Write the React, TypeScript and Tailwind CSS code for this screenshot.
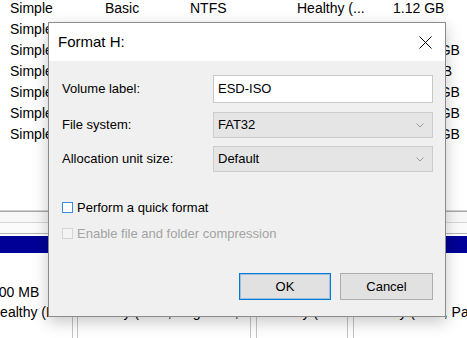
import React from 'react';

const volumes = [
  { layout: 'Simple', type: 'Basic', fs: 'NTFS', status: 'Healthy (...', size: '1.12 GB' },
  { layout: 'Simple', type: 'Basic', fs: 'NTFS', status: 'Healthy (...', size: '500 MB' },
  { layout: 'Simple', type: 'Basic', fs: 'NTFS', status: 'Healthy (...', size: '465.76 GB' },
  { layout: 'Simple', type: 'Basic', fs: 'NTFS', status: 'Healthy (...', size: '19.77 GB' },
  { layout: 'Simple', type: 'Basic', fs: 'NTFS', status: 'Healthy (...', size: '465.76 GB' },
  { layout: 'Simple', type: 'Basic', fs: 'NTFS', status: 'Healthy (...', size: '465.76 GB' },
  { layout: 'Simple', type: 'Basic', fs: 'NTFS', status: 'Healthy (...', size: '465.76 GB' },
];

function Chevron() {
  return (
    <svg width="8" height="5" viewBox="0 0 8 5" className="text-[#9a9a9a]">
      <path d="M0.5 0.5 L4 4 L7.5 0.5" fill="none" stroke="currentColor" strokeWidth="1" />
    </svg>
  );
}

function Select({ value }: { value: string }) {
  return (
    <div className="flex h-[26px] w-[220px] items-center justify-between border border-[#cccccc] bg-[#e5e5e5] pl-[4px] pr-[8px]">
      <span>{value}</span>
      <Chevron />
    </div>
  );
}

function FormatDialog() {
  return (
    <div className="absolute left-[48px] top-[22px] flex h-[295px] w-[398px] flex-col border border-[#8c8c8c] bg-[#f0f0f0] shadow-[0_5px_15px_rgba(0,0,0,0.22)] text-[13px]">
      {/* title bar */}
      <div className="flex h-[38px] items-center justify-between bg-white pl-[9px] pr-[13px]">
        <span className="text-[15px]">Format H:</span>
        <svg width="13" height="13" viewBox="0 0 13 13">
          <path d="M0.5 0.5 L12.5 12.5 M12.5 0.5 L0.5 12.5" stroke="#000" strokeWidth="1" fill="none" />
        </svg>
      </div>

      <div className="flex flex-1 flex-col pl-[13px] pr-[12px] pt-[14px]">
        <div className="flex items-center">
          <span className="w-[151px]">Volume label:</span>
          <div className="flex h-[28px] w-[220px] items-center border border-[#c8c8c8] bg-white pl-[4px]">ESD-ISO</div>
        </div>
        <div className="mt-[9px] flex items-center">
          <span className="w-[151px]">File system:</span>
          <Select value="FAT32" />
        </div>
        <div className="mt-[8px] flex items-center">
          <span className="w-[151px]">Allocation unit size:</span>
          <Select value="Default" />
        </div>

        <div className="mt-[27px] flex h-[17px] items-center gap-[4px]">
          <span className="h-[11px] w-[11px] border border-[#3b8ede] bg-white" />
          <span>Perform a quick format</span>
        </div>
        <div className="mt-[9px] flex h-[17px] items-center gap-[4px] text-[#a3a3a3]">
          <span className="h-[11px] w-[11px] border border-[#d4d4d4] bg-[#f4f4f4]" />
          <span>Enable file and folder compression</span>
        </div>

        <div className="mt-[31px] flex justify-end gap-[9px]">
          <button className="h-[27px] w-[92px] border border-[#0078d7] bg-[#e1e1e1] shadow-[inset_0_0_0_1px_rgba(0,120,215,0.3)]">OK</button>
          <button className="h-[27px] w-[93px] border border-[#adadad] bg-[#e1e1e1]">Cancel</button>
        </div>
      </div>
    </div>
  );
}

export default function App() {
  return (
    <div className="relative h-[338px] w-[467px] overflow-hidden bg-white font-['Liberation_Sans',Arial,sans-serif] text-[14px] text-black">
      {/* volume list */}
      <div className="-mt-[2px]">
        {volumes.map((v, i) => (
          <div key={i} className="flex h-[21px] items-center whitespace-nowrap">
            <span className="w-[105px] pl-[10px]">{v.layout}</span>
            <span className="w-[85px]">{v.type}</span>
            <span className="w-[107px]">{v.fs}</span>
            <span className="w-[96px]">{v.status}</span>
            <span>{v.size}</span>
          </div>
        ))}
      </div>

      {/* splitter / disk header */}
      <div className="mt-[65px]">
        <div className="h-[1px] bg-[#cfcfcf]" />
        <div className="h-[1px] bg-[#a8a8a8]" />
        <div className="h-[10px] bg-[#f7f7f7]" />
        <div className="h-[1px] bg-[#d6d6d6]" />
        <div className="h-[10px] bg-[#fbfbfb]" />
        <div className="h-[1px] bg-[#b4b4b4]" />
        <div className="h-[2px] bg-white" />
        <div className="h-[17px] bg-[#000096]" />
      </div>

      {/* partitions */}
      <div className="flex h-[90px] whitespace-nowrap leading-[20px]">
        <div className="w-[73px] overflow-hidden border-r border-[#c4c4c4] pt-[29px]">
          <div className="-ml-[9px]">500 MB</div>
          <div className="-ml-[10px]">Healthy (EFI System Partition)</div>
        </div>
        <div className="ml-[4px] w-[174px] overflow-hidden border-x border-[#c4c4c4] pl-[5px] pt-[29px]">
          <div>232.30 GB NTFS</div>
          <div>Healthy (Boot, Page File, Crash Dump, Primary Partition)</div>
        </div>
        <div className="ml-[5px] w-[92px] overflow-hidden border-x border-[#c4c4c4] pl-[5px] pt-[29px]">
          <div>450 MB NTFS</div>
          <div>Healthy (Primary Partition)</div>
        </div>
        <div className="ml-[5px] flex-1 overflow-hidden border-l border-[#c4c4c4] pl-[5px] pt-[29px]">
          <div>16 GB NTFS</div>
          <div>Healthy (Boot, Page File)</div>
        </div>
      </div>

      <FormatDialog />
    </div>
  );
}
